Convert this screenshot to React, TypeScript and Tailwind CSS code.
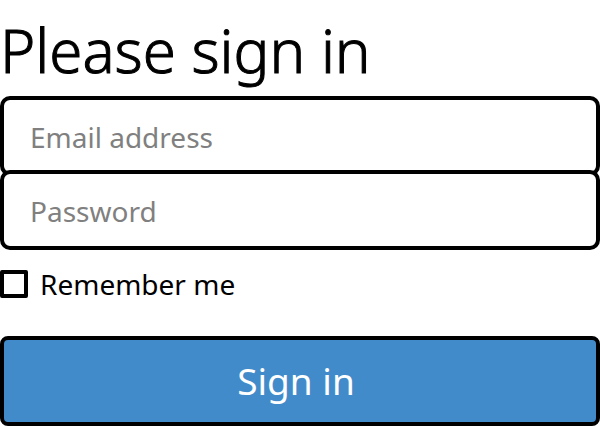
import React from "react";

const field =
  "block h-20 w-full rounded-[10px] border-4 border-black bg-white px-[26px] pt-[2px] text-[28px] text-black outline-none placeholder:text-[#808080] placeholder:opacity-100";

export default function App() {
  return (
    <form
      className="w-full bg-white pt-2 font-['Noto_Sans','Open_Sans',sans-serif] text-black"
      onSubmit={(event) => event.preventDefault()}
    >
      <h1 className="pb-1 text-[60px] leading-[84px] font-light [-webkit-text-stroke:1px_black]">Please sign in</h1>
      <input type="email" aria-label="Email address" placeholder="Email address" className={field} />
      <input type="password" aria-label="Password" placeholder="Password" className={`${field} relative -mt-[6px]`} />
      <label className="mt-[14px] flex h-10 items-center gap-3 text-[28px]">
        <input type="checkbox" className="size-7 shrink-0 appearance-none rounded-xs border-4 border-black bg-white checked:bg-[#428bca]" />
        Remember me
      </label>
      <button type="submit" className="mt-8 block h-[90px] w-full rounded-lg border-4 border-black bg-[#428bca] pr-2 text-[37px] text-white">
        Sign in
      </button>
    </form>
  );
}
